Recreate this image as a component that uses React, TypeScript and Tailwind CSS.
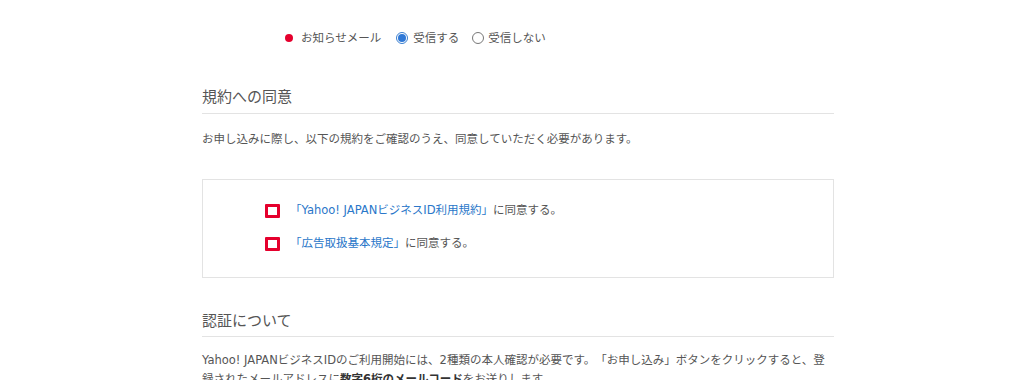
import React from "react";

const font = { fontFamily: '"DejaVu Sans", "Noto Sans CJK JP", sans-serif' };

function Check({ children }: { children: React.ReactNode }) {
  return (
    <div className="flex items-center h-[20px]">
      <span className="w-[15px] h-[14px] border-[3px] border-[#e5002d] rounded-[1px] bg-white box-border" />
      <span className="ml-[10px] text-[11.5px] text-[#555]">{children}</span>
    </div>
  );
}

export default function App() {
  return (
    <div className="bg-white w-[1033px] h-[380px] overflow-hidden [text-spacing-trim:space-all]" style={font}>
      <div className="ml-[202px] w-[632px]">
        <div className="flex items-center h-[20px] mt-[28px] text-[11.5px] text-[#555]">
          <span className="ml-[83px] w-[8px] h-[8px] rounded-full bg-[#e5002d]" />
          <span className="ml-[8px] relative top-[1px]">お知らせメール</span>
          <span className="ml-[15px] w-[12px] h-[12px] rounded-full border border-[#3a7fd0] flex items-center justify-center">
            <span className="w-[8px] h-[8px] rounded-full bg-[#2f78d6]" />
          </span>
          <span className="ml-[5px] relative top-[1px]">受信する</span>
          <span className="ml-[13px] w-[12px] h-[12px] rounded-full border border-[#777] bg-white" />
          <span className="ml-[4px] relative top-[1px]">受信しない</span>
        </div>

        <div className="mt-[39px] pb-[6px] border-b border-[#e3e3e3] text-[15px] text-[#555] leading-[20px]">
          規約への同意
        </div>
        <p className="mt-[16px] text-[11.5px] text-[#555] leading-[18px]">
          お申し込みに際し、以下の規約をご確認のうえ、同意していただく必要があります。
        </p>

        <div className="mt-[31px] h-[99px] border border-[#e3e3e3] pl-[62px] pt-[21px] flex flex-col gap-[13px]">
          <Check>
            <span className="text-[#2a77c9]">「Yahoo! JAPANビジネスID利用規約」</span>に同意する。
          </Check>
          <Check>
            <span className="text-[#2a77c9]">「広告取扱基本規定」</span>に同意する。
          </Check>
        </div>

        <div className="mt-[33px] pb-[5px] border-b border-[#e3e3e3] text-[15px] text-[#555] leading-[20px]">
          認証について
        </div>
        <p className="mt-[14px] text-[11.5px] text-[#555] leading-[19px] w-[632px]">
          Yahoo! JAPANビジネスIDのご利用開始には、2種類の本人確認が必要です。「お申し込み」ボタンをクリックすると、登録されたメールアドレスに<b className="font-bold text-[#333]">数字6桁のメールコード</b>をお送りします。
        </p>
      </div>
    </div>
  );
}
